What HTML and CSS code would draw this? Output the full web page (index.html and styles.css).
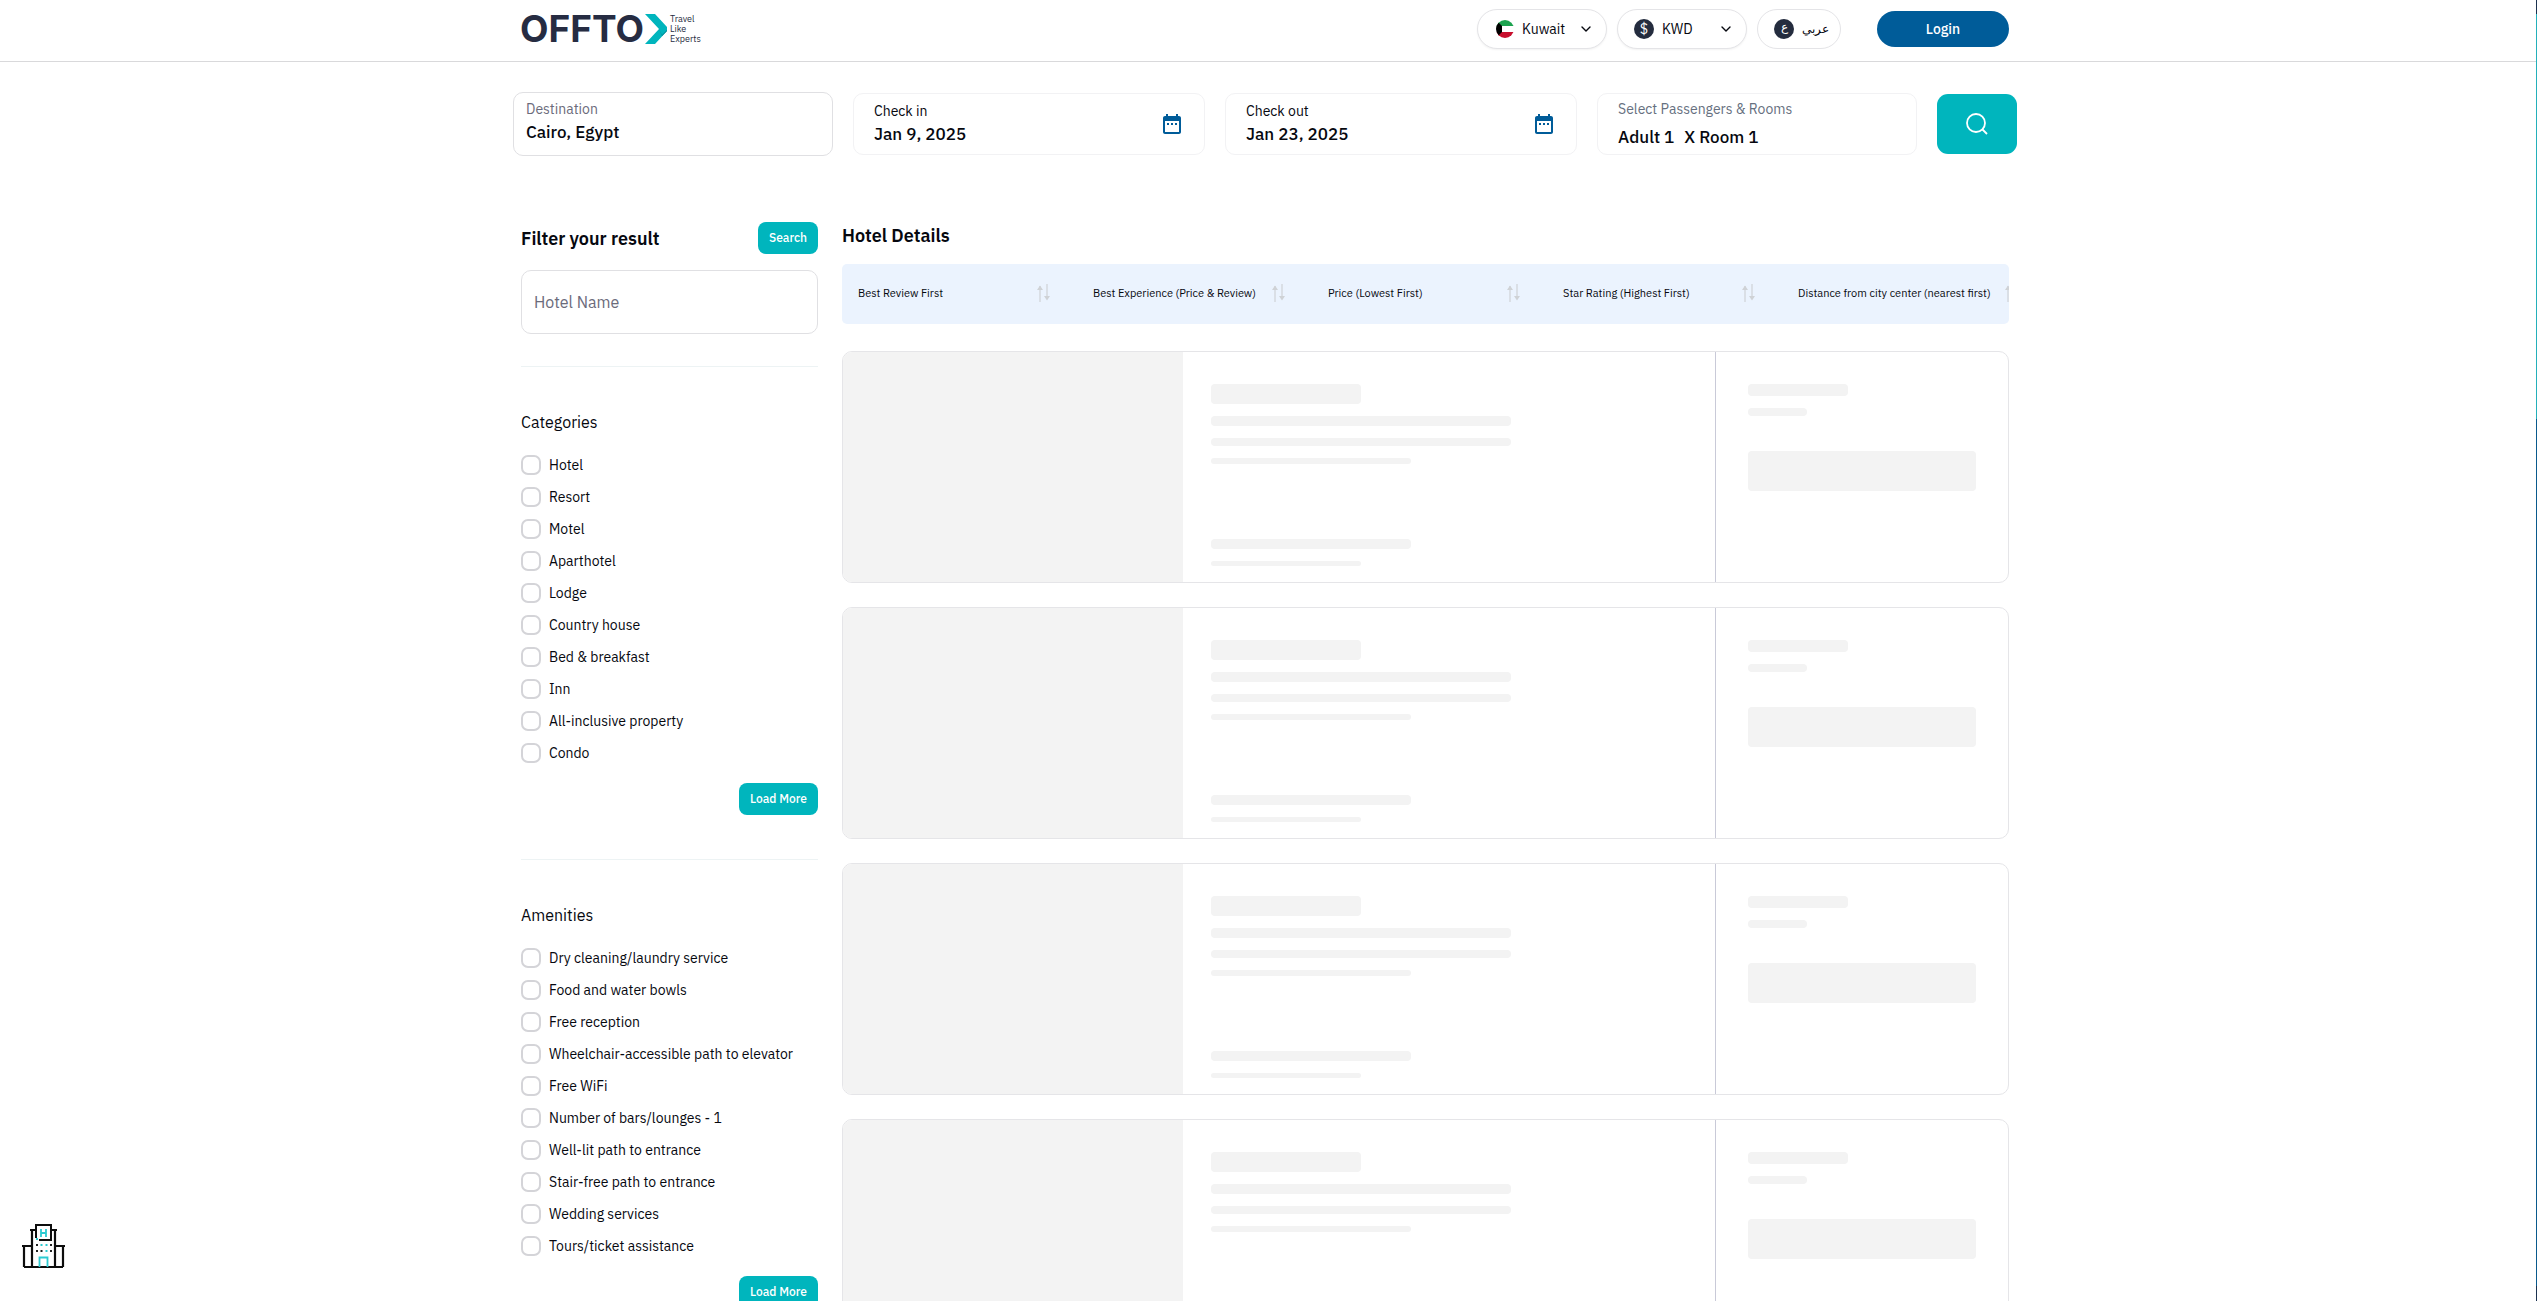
FILE: index.html
```html
<!DOCTYPE html>
<html lang="en">
<head>
<meta charset="utf-8">
<meta name="viewport" content="width=device-width, initial-scale=1">
<title>OFFTO - Hotels in Cairo</title>
<link rel="stylesheet" href="styles.css">
</head>
<body>
<svg class="defs" aria-hidden="true">
  <symbol id="chevron" viewBox="0 0 12 12"><path d="M2 4l4 4 4-4" fill="none" stroke="currentColor" stroke-width="1.4" stroke-linecap="round" stroke-linejoin="round"/></symbol>
  <symbol id="calendar" viewBox="0 0 18 20"><path fill="currentColor" d="M16 2h-1V0h-2v2H5V0H3v2H2C.9 2 0 2.900 0 4v14c0 1.100.9 2 2 2h14c1.100 0 2-.9 2-2V4c0-1.100-.9-2-2-2zm0 16H2V7h14zM4 9h2v2H4zm4 0h2v2H8zm4 0h2v2h-2z"/></symbol>
  <symbol id="sort" viewBox="0 0 16 18"><path d="M5 18V2M12 0v15" fill="none" stroke="currentColor" stroke-width="1.200"/><path d="M5 1.500L8 6H2zM12 16.500L15 12H9z" fill="currentColor"/></symbol>
</svg>
<div class="page">
  <header class="site-header">
    <div class="wrap header-row">
      <a class="logo" href="#" aria-label="OFFTO home">
        <span class="logo-name">OFFTO</span>
        <svg class="logo-mark" viewBox="0 0 22 30" aria-hidden="true"><path d="M0 0h10l12 13v4L10 30H0l14-15z" fill="#00b5bd"/><path d="M14 15l3 6 5-5v1L17 22z" fill="#067f8c"/></svg>
        <span class="logo-tag">Travel<br>Like<br>Experts</span>
      </a>
      <div class="header-tools">
        <div class="pill">
          <svg class="flag" viewBox="0 0 18 18" aria-hidden="true"><defs><clipPath id="disc"><circle cx="9" cy="9" r="9"/></clipPath></defs><g clip-path="url(#disc)"><path fill="#fff" d="M0 0h18v18H0z"/><path fill="#1ca34f" d="M0 0h18v6H0z"/><path fill="#c8102e" d="M0 12h18v6H0z"/><path d="M0 0l6 6v6l-6 6z"/></g></svg>
          <select aria-label="Country"><option>Kuwait</option></select>
          <svg class="chev"><use href="#chevron"/></svg>
        </div>
        <div class="pill pill-currency">
          <span class="coin">$</span>
          <select aria-label="Currency"><option>KWD</option></select>
          <svg class="chev"><use href="#chevron"/></svg>
        </div>
        <button class="pill pill-lang" type="button"><span class="coin coin-ar">ع</span><span class="lang-name" lang="ar">عربي</span></button>
        <button class="login" type="button">Login</button>
      </div>
    </div>
  </header>

  <form class="wrap search-bar">
    <div class="field field-destination">
      <label for="destination">Destination</label>
      <input id="destination" type="text" value="Cairo, Egypt">
    </div>
    <div class="field">
      <div class="field-text"><label for="checkin">Check in</label><input id="checkin" type="text" value="Jan 9, 2025"></div>
      <svg class="cal"><use href="#calendar"/></svg>
    </div>
    <div class="field">
      <div class="field-text"><label for="checkout">Check out</label><input id="checkout" type="text" value="Jan 23, 2025"></div>
      <svg class="cal"><use href="#calendar"/></svg>
    </div>
    <button class="field field-guests" type="button">
      <span class="guests-label">Select Passengers &amp; Rooms</span>
      <span class="guests-value"><span>Adult 1</span> <span>X Room 1</span></span>
    </button>
    <button class="go" type="submit" aria-label="Search hotels"><svg viewBox="0 0 22 22" fill="none" stroke="#fff" stroke-width="1.800"><circle cx="10" cy="10" r="9"/><path d="M16 16l5 5"/></svg></button>
  </form>

  <div class="wrap content">
    <aside class="filters">
      <div class="filters-head"><h2>Filter your result</h2><button class="btn" type="button">Search</button></div>
      <input class="hotel-name" type="text" placeholder="Hotel Name" aria-label="Hotel Name">
      <section class="group">
        <h3>Categories</h3>
        <div class="checks">
          <label><input type="checkbox">Hotel</label>
          <label><input type="checkbox">Resort</label>
          <label><input type="checkbox">Motel</label>
          <label><input type="checkbox">Aparthotel</label>
          <label><input type="checkbox">Lodge</label>
          <label><input type="checkbox">Country house</label>
          <label><input type="checkbox">Bed &amp; breakfast</label>
          <label><input type="checkbox">Inn</label>
          <label><input type="checkbox">All-inclusive property</label>
          <label><input type="checkbox">Condo</label>
        </div>
        <button class="btn" type="button">Load More</button>
      </section>
      <section class="group">
        <h3>Amenities</h3>
        <div class="checks">
          <label><input type="checkbox">Dry cleaning/laundry service</label>
          <label><input type="checkbox">Food and water bowls</label>
          <label><input type="checkbox">Free reception</label>
          <label><input type="checkbox">Wheelchair-accessible path to elevator</label>
          <label><input type="checkbox">Free WiFi</label>
          <label><input type="checkbox">Number of bars/lounges - 1</label>
          <label><input type="checkbox">Well-lit path to entrance</label>
          <label><input type="checkbox">Stair-free path to entrance</label>
          <label><input type="checkbox">Wedding services</label>
          <label><input type="checkbox">Tours/ticket assistance</label>
        </div>
        <button class="btn" type="button">Load More</button>
      </section>
    </aside>

    <main class="results">
      <h2>Hotel Details</h2>
      <div class="sort-bar">
        <button type="button">Best Review First<svg><use href="#sort"/></svg></button>
        <button type="button">Best Experience (Price &amp; Review)<svg><use href="#sort"/></svg></button>
        <button type="button">Price (Lowest First)<svg><use href="#sort"/></svg></button>
        <button type="button">Star Rating (Highest First)<svg><use href="#sort"/></svg></button>
        <button type="button">Distance from city center (nearest first)<svg><use href="#sort"/></svg></button>
      </div>
      <div class="cards">
        <article class="card"><div class="photo"></div><div class="info"><i class="bar title"></i><i class="bar line"></i><i class="bar line-2"></i><i class="bar line-3"></i><i class="bar review"></i><i class="bar note"></i></div><div class="price"><i class="bar amount"></i><i class="bar nights"></i><i class="bar action"></i></div></article>
        <article class="card"><div class="photo"></div><div class="info"><i class="bar title"></i><i class="bar line"></i><i class="bar line-2"></i><i class="bar line-3"></i><i class="bar review"></i><i class="bar note"></i></div><div class="price"><i class="bar amount"></i><i class="bar nights"></i><i class="bar action"></i></div></article>
        <article class="card"><div class="photo"></div><div class="info"><i class="bar title"></i><i class="bar line"></i><i class="bar line-2"></i><i class="bar line-3"></i><i class="bar review"></i><i class="bar note"></i></div><div class="price"><i class="bar amount"></i><i class="bar nights"></i><i class="bar action"></i></div></article>
        <article class="card"><div class="photo"></div><div class="info"><i class="bar title"></i><i class="bar line"></i><i class="bar line-2"></i><i class="bar line-3"></i><i class="bar review"></i><i class="bar note"></i></div><div class="price"><i class="bar amount"></i><i class="bar nights"></i><i class="bar action"></i></div></article>
      </div>
    </main>
  </div>
</div>
<div class="scroll-edge" aria-hidden="true"><span class="cap"></span><span class="thumb"></span><span class="track"></span><span class="cap"></span></div>
<svg class="hotel-badge" viewBox="0 0 43 44" fill="none" aria-hidden="true">
  <path d="M10 43V6M33 43V6M8 6h6M29 6h6M2 43V22M41 43V22M0 22h9M34 22h9M2 43h39" stroke="#0d0d0d" stroke-width="2.200"/>
  <path d="M14 14V1h15v15H17" stroke="#0d0d0d" stroke-width="2"/>
  <path d="M19 5v8M24 5v8M19 9h5M17.500 43V33.500h8V43M14 15h2" stroke="#2bcbd2" stroke-width="1.800"/>
  <path d="M14 21h2M28 21h2M14 27h2M18.500 27h2M28 27h2" stroke="#222" stroke-width="2"/>
  <path d="M18.500 21h2M23.500 21h2M23.500 27h2" stroke="#2bcbd2" stroke-width="2"/>
</svg>
</body>
</html>
```
FILE: styles.css
```css
* { box-sizing: border-box; }
body {
  margin: 0;
  height: 100vh;
  display: grid;
  grid-template-columns: 1fr 1px;
  background: #fff;
  color: #06080f;
  font-family: "IBM Plex Sans", "Noto Sans", sans-serif;
  font-size: 14px;
  line-height: 20px;
}
button, input, select { font: inherit; color: inherit; }
button { cursor: pointer; }
h2, h3 { margin: 0; }
.defs { display: none; }
.page { overflow-y: auto; scrollbar-width: none; min-height: 0; }
.wrap { max-width: 1536px; margin: 0 auto; }

/* Header */
.site-header { border-bottom: 1px solid #d9d9db; }
.header-row {
  display: flex;
  justify-content: space-between;
  padding: 9px 27px 12px 20px;
}
.logo { display: flex; align-items: center; color: #262c42; text-decoration: none; }
.logo-name { font: 700 37px/40px Inter, sans-serif; }
.logo-mark { width: 22px; height: 30px; margin: 0 3px 0 1px; }
.logo-tag { font-size: 9px; line-height: 10px; }
.header-tools { display: flex; align-items: center; gap: 10px; }
.pill {
  display: flex;
  align-items: center;
  width: 130px;
  height: 40px;
  padding: 0 14px 0 18px;
  border: 1px solid #e4e4e7;
  border-radius: 20px;
  background: #fff;
  box-shadow: 0 1px 2px #0000000d;
}
.pill select {
  appearance: none;
  flex: 1;
  min-width: 0;
  margin-left: 8px;
  padding: 0;
  border: 0;
  background: none;
}
.pill-currency { padding-left: 16px; }
.pill-lang { width: 84px; padding: 0 16px; gap: 8px; box-shadow: none; }
.flag { width: 18px; height: 18px; }
.chev { width: 12px; height: 12px; }
.coin {
  flex: none;
  width: 20px;
  height: 20px;
  border-radius: 50%;
  background: #242c3e;
  color: #fff;
  text-align: center;
  font-size: 14px;
}
.coin-ar, .lang-name { font-size: 12px; }
.coin-ar { line-height: 16px; }
.login {
  width: 132px;
  height: 36px;
  margin-left: 26px;
  border: 0;
  border-radius: 18px;
  background: #005c99;
  color: #fff;
  font-weight: 500;
}

/* Search bar */
.search-bar {
  display: grid;
  grid-template-columns: 10fr 11fr 11fr 10fr 80px;
  gap: 20px;
  align-items: center;
  padding: 30px 19px 0 13px;
}
.field {
  display: flex;
  align-items: center;
  justify-content: space-between;
  height: 62px;
  padding: 0 23px 0 20px;
  border: 1px solid #f2f2f4;
  border-radius: 10px;
  background: #fff;
  text-align: left;
}
.field input {
  display: block;
  width: 100%;
  padding: 0;
  border: 0;
  outline: 0;
  background: none;
  font-size: 17px;
  font-weight: 500;
  line-height: 26px;
}
.field-text { flex: 1; }
.field label { display: block; }
.field-destination {
  display: block;
  height: 64px;
  padding: 6px 12px;
  border-color: #e0e0e3;
}
.field-destination label { color: #6b6b7b; }
.cal { width: 18px; height: 20px; color: #005c99; }
.field-guests { flex-direction: column; align-items: flex-start; justify-content: center; gap: 5px; }
.guests-label { color: #667080; }
.guests-value { display: flex; gap: 10px; font-size: 17px; font-weight: 500; line-height: 26px; }
.go {
  display: grid;
  place-items: center;
  height: 60px;
  border: 0;
  border-radius: 11px;
  background: #00b5bd;
}
.go svg { width: 22px; height: 22px; }

/* Content */
.content {
  display: grid;
  grid-template-columns: 297px minmax(0, 1fr);
  gap: 24px;
  padding: 66px 27px 24px 21px;
}
h2 { padding-top: 2px; font-size: 18px; font-weight: 600; line-height: 24px; }
.btn {
  height: 32px;
  padding: 0 11px;
  border: 0;
  border-radius: 8px;
  background: #00b5bd;
  color: #fff;
  font-size: 12px;
  font-weight: 500;
}
.filters-head { display: flex; justify-content: space-between; align-items: center; }
.hotel-name {
  display: block;
  width: 100%;
  height: 64px;
  margin: 16px 0 32px;
  padding: 0 12px;
  border: 1px solid #e0e0e3;
  border-radius: 10px;
  font-size: 16px;
}
.hotel-name::placeholder { color: #6b6b7b; opacity: 1; }
.group {
  display: flex;
  flex-direction: column;
  padding: 43px 0 44px;
  border-top: 1px solid #edf3f4;
}
h3 { font-size: 16px; font-weight: 400; line-height: 24px; }
.checks { display: grid; gap: 12px; margin: 21px 0 20px; }
.checks label { display: flex; align-items: center; gap: 8px; }
.checks input {
  appearance: none;
  width: 20px;
  height: 20px;
  margin: 0;
  border: 2px solid #d4d4d8;
  border-radius: 7px;
}
.checks input:checked { background: #00b5bd; }
.group .btn { align-self: flex-end; }

.sort-bar {
  display: flex;
  height: 60px;
  margin: 16px 0 27px;
  border-radius: 5px;
  background: #ebf3fe;
  overflow: hidden;
}
.sort-bar button {
  display: flex;
  flex: none;
  align-items: center;
  justify-content: space-between;
  gap: 12px;
  min-width: 235px;
  padding: 0 26px 2px 16px;
  border: 0;
  background: none;
  font-size: 11px;
  white-space: nowrap;
}
.sort-bar svg { flex: none; width: 16px; height: 18px; color: #cfd2d6; }

/* Loading cards */
.cards { display: grid; gap: 24px; }
.card {
  display: grid;
  grid-template-columns: 51fr 80fr 44fr;
  height: 232px;
  border: 1px solid #e5e5e8;
  border-radius: 10px;
  overflow: hidden;
}
.photo, .bar { background: #f3f3f3; }
.info, .price { display: flex; flex-direction: column; gap: 12px; }
.info { padding: 32px 4px 16px 28px; }
.price { padding: 32px; border-left: 1px solid #c9cad8; }
.bar { border-radius: 4px; }
.title { width: 30%; height: 20px; }
.line { width: 60%; height: 10px; }
.line-2 { width: 60%; height: 8px; }
.line-3 { width: 40%; height: 6px; }
.review { width: 40%; height: 10px; margin-top: auto; }
.note { width: 30%; height: 5px; }
.amount { width: 44%; height: 12px; }
.nights { width: 26%; height: 8px; }
.action { height: 40px; margin-top: 23px; }

/* Thin page edge */
.scroll-edge { display: grid; grid-template-rows: 14px 405fr 867fr 15px; }
.cap { background: #1b3350; }
.thumb { background: #24b0ba; }
.track { background: #0a5a8c; }
.hotel-badge { position: fixed; left: 22px; bottom: 33px; width: 43px; height: 44px; }
```
